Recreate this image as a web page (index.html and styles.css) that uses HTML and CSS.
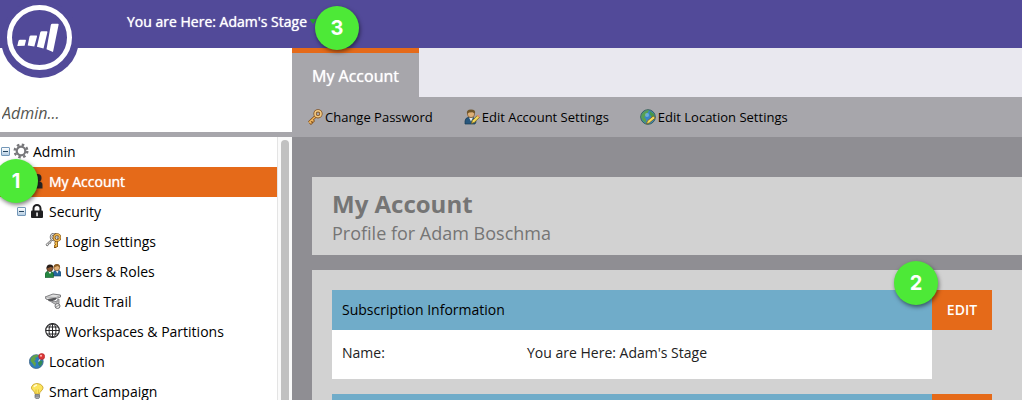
FILE: index.html
```html
<!DOCTYPE html>
<html lang="en">
<head>
  <meta charset="UTF-8" />
  <meta name="viewport" content="width=device-width, initial-scale=1.0" />
  <title>My Account</title>
  <link rel="stylesheet" href="styles.css">
</head>
<body>
  <header class="topbar">
    <a class="logo" href="#" aria-label="Home">
      <svg viewBox="0 0 80 80" width="80" height="80">
        <circle cx="40" cy="39" r="39" fill="#524a99"/>
        <circle cx="39.500" cy="37.500" r="30" fill="none" stroke="#fff" stroke-width="5"/>
        <g fill="#fff">
          <path d="M18.500 40.700q.5-.9 1.500-.9h5.300q.9 0 .6 1l-1.300 4.900-7.300.2z"/>
          <path d="M29.500 36.500q.4-1 1.400-1h5.500q.9 0 .6 1l-2.700 10-6.600-.9z"/>
          <path d="M40.300 32.300q.4-1 1.400-1h5q1 0 .7 1L43.500 48.600l-6.600-1.900z"/>
          <path d="M50.800 25q.4-1.300 1.500-1.300h5.600q1 0 .7 1.100L53 52l-6.500-2.800z"/>
        </g>
      </svg>
    </a>
    <button class="stage-menu">
      You are Here: Adam's Stage
      <svg class="caret" viewBox="0 0 6 6" width="6" height="6"><path d="M0 1h6v1L3 6 0 2z" fill="#249c32"/></svg>
      <span class="badge badge-stage">3</span>
    </button>
  </header>

  <div class="layout">
    <aside class="sidebar">
      <div class="search">
        <input type="text" placeholder="Admin..." aria-label="Search admin">
      </div>
      <div class="tree-wrap">
        <ul class="tree">
          <li class="node">
            <button class="toggle" aria-label="Collapse"></button>
            <svg class="icon" viewBox="0 0 16 16" width="16" height="16">
              <circle cx="8" cy="8" r="6.300" fill="none" stroke="#77777a" stroke-width="2.400" stroke-dasharray="2.500 2.450"/>
              <circle cx="8" cy="8" r="4.300" fill="none" stroke="#77777a" stroke-width="2.200"/>
            </svg>
            <a href="#">Admin</a>
          </li>
          <li class="node level-1 selected">
            <svg class="icon" viewBox="0 0 16 16" width="16" height="16" fill="#262626">
              <circle cx="8.500" cy="5" r="4"/><path d="M3 15.500V12q0-3.500 4-3.500h3q3.500 0 3.500 3.500v3.500z"/>
            </svg>
            <a href="#">My Account</a>
            <span class="badge badge-account">1</span>
          </li>
          <li class="node level-1 open">
            <button class="toggle" aria-label="Collapse"></button>
            <svg class="icon" viewBox="0 0 16 16" width="16" height="16">
              <path d="M4.500 8V5.500a3.500 3.500 0 0 1 7 0V8" fill="none" stroke="#1f1f21" stroke-width="2"/>
              <rect x="2" y="7.500" width="12" height="7.500" rx="1" fill="#1f1f21"/>
              <path d="M7.300 9.500h1.500v3.700H7.300z" fill="#fff"/>
            </svg>
            <a href="#">Security</a>
          </li>
          <li class="node level-2">
            <svg class="icon" viewBox="0 0 16 16" width="16" height="16">
              <path d="M7 6L1 11.500l1 1.500 1.500-1 .5-2 1.500.3.500-2L8 7" fill="#eee" stroke="#777" stroke-width="1"/>
              <circle cx="9" cy="4" r="3" fill="none" stroke="#777" stroke-width="2.600"/>
              <circle cx="9" cy="4" r="3" fill="none" stroke="#ddd" stroke-width="1"/>
              <path d="M11.500 7v7M11.500 10H9.500M11.500 13.500H9" stroke="#7a4c13" stroke-width="3"/>
              <path d="M11.500 7v6.500M11.500 10H10M11.500 13H9.500" stroke="#f3bd4b" stroke-width="1.500"/>
              <circle cx="12" cy="4.500" r="3" fill="none" stroke="#7a4c13" stroke-width="2.700"/>
              <circle cx="12" cy="4.500" r="3" fill="none" stroke="#f1bb54" stroke-width="1.300"/>
            </svg>
            <a href="#">Login Settings</a>
          </li>
          <li class="node level-2">
            <svg class="icon" viewBox="0 0 16 16" width="16" height="16">
              <path d="M8 13V10q1-3 4-3 4 0 4 4v2z" fill="#2668a0" stroke="#174363" stroke-width=".6"/>
              <path d="M10.500 7.500l2 3 1-3z" fill="#eee"/>
              <circle cx="11.700" cy="4.700" r="3" fill="#e1b076" stroke="#6a421e" stroke-width=".6"/>
              <path d="M8.500 5q0-4 3.500-4 3.500 0 3 4l-2-2-2 .5z" fill="#8a5b24"/>
              <path d="M0 14.500V11q1-3 4-3 4 0 4.500 3v3.500z" fill="#258641" stroke="#14542a" stroke-width=".6"/>
              <path d="M3 8l2 3 1.500-2.500z" fill="#fff"/>
              <circle cx="4.800" cy="5.500" r="3" fill="#8b5632" stroke="#3a2516" stroke-width=".6"/>
              <path d="M1.500 5.500Q1.500 1.500 5 1.500t3 3L5.500 4 3 5z" fill="#271d18"/>
            </svg>
            <a href="#">Users &amp; Roles</a>
          </li>
          <li class="node level-2">
            <svg class="icon" viewBox="0 0 16 16" width="16" height="16">
              <path d="M0 4l8-3 7.500 1v2L5.500 7.500 1 6z" fill="#e1e1e1" stroke="#717174" stroke-width=".9"/>
              <path d="M3 6l8-1.500v2L6 8.800 3.500 8z" fill="#58585b"/>
              <path d="M1 4l10 .5 4-2" fill="none" stroke="#9a9a9c" stroke-width=".8"/>
              <path d="M6.500 9l5 3 2.500-1.500V6l-2 1v2L9 8z" fill="#bbb" stroke="#747478" stroke-width=".8"/>
              <circle cx="12.500" cy="13" r="2.500" fill="#e8e8e8" stroke="#707074"/>
              <path d="M11 14l3-2" stroke="#999"/>
            </svg>
            <a href="#">Audit Trail</a>
          </li>
          <li class="node level-2">
            <svg class="icon" viewBox="0 0 16 16" width="16" height="16" fill="none" stroke="#28282a" stroke-width="1">
              <circle cx="7.500" cy="7.500" r="6.800" stroke-width="1.200"/>
              <ellipse cx="7.500" cy="7.500" rx="3.500" ry="6.800"/>
              <path d="M7.500 1v13.500M1 7.500h13M1.800 4h11.400M1.800 11h11.400"/>
            </svg>
            <a href="#">Workspaces &amp; Partitions</a>
          </li>
          <li class="node level-1">
            <svg class="icon" viewBox="0 0 16 16" width="16" height="16">
              <circle cx="7.300" cy="8.600" r="6.900" fill="#2e7dbd" stroke="#3a6286" stroke-width=".8"/>
              <path d="M2 5q3-4 7-3L8.500 4 6 5l1 2-2 1 2 2-1 4-2-3-2.500-3z" fill="#62a348"/>
              <path d="M10 7l3.500 1-.5 3-2 2.500L9 11z" fill="#348b52"/>
              <path d="M9.500 8.500L12 5" stroke="#ddd" stroke-width="1.200"/>
              <circle cx="12.700" cy="3.500" r="3" fill="#dc3737" stroke="#ad2025" stroke-width=".6"/>
              <circle cx="12" cy="2.700" r="1" fill="#ffc2bd"/>
            </svg>
            <a href="#">Location</a>
          </li>
          <li class="node level-1">
            <svg class="icon" viewBox="0 0 16 16" width="16" height="16">
              <path d="M6 11q0-2-2-3.500Q2 6 2.500 4q1-3.500 5.500-3.500T14 4q.5 2-1.800 4-1.700 1.500-1.700 3z" fill="#fce45d" stroke="#c9a532" stroke-width=".9"/>
              <path d="M5 4q1-2 3-2" fill="none" stroke="#fffbd4" stroke-width="1.600"/>
              <path d="M7 6.500v4M9.500 6.500v4" stroke="#d4b332" stroke-width=".7"/>
              <path d="M6 11.500h4.500v3l-1 1.200H7L6 14.500z" fill="#a9acb0" stroke="#676a70" stroke-width=".7"/>
              <path d="M6 13h4.500" stroke="#5e6167" stroke-width=".7"/>
            </svg>
            <a href="#">Smart Campaign</a>
          </li>
        </ul>
        <div class="scrollbar"><div class="thumb"></div></div>
      </div>
    </aside>

    <main class="main">
      <nav class="tabs">
        <a class="tab" href="#">My Account</a>
      </nav>
      <div class="toolbar">
        <button class="tool">
          <svg class="icon" viewBox="0 0 16 16" width="16" height="16" fill="none">
            <path d="M9 7L2 13.500M5 11l2 2M3 13l2 2" stroke="#82501c" stroke-width="3"/>
            <path d="M9 7L2 13.500M5 11l1.500 1.500M3 13l1.500 1.500" stroke="#f1b760" stroke-width="1.400"/>
            <circle cx="11" cy="4.800" r="3" stroke="#82501c" stroke-width="3.200"/>
            <circle cx="11" cy="4.800" r="3" stroke="#f3ca83" stroke-width="1.600"/>
          </svg>
          Change Password
        </button>
        <button class="tool">
          <svg class="icon" viewBox="0 0 16 16" width="16" height="16">
            <path d="M1 15v-3q0-3 4-4h3q4 1 4 5l-1 2z" fill="#28577d" stroke="#173952" stroke-width=".7"/>
            <path d="M5 8.500l2 4 2-4z" fill="#e7edf0"/>
            <circle cx="7" cy="5" r="3.600" fill="#ddb078" stroke="#72502b" stroke-width=".7"/>
            <path d="M3 5Q2 .5 7 .5t4 4L8.500 3.200 5 3.500z" fill="#705629"/>
            <path d="M7.500 14.500l.8-3 5-5 2 2-5 5z" fill="#f4d95c" stroke="#73601c" stroke-width=".8"/>
            <path d="M13 6.500l1.200-1 1.600 1.600-1 1.200z" fill="#e58d71"/>
          </svg>
          Edit Account Settings
        </button>
        <button class="tool">
          <svg class="icon" viewBox="0 0 16 16" width="16" height="16">
            <circle cx="8" cy="8" r="7.300" fill="#3984c9" stroke="#3b6259" stroke-width="1"/>
            <path d="M2 5q3-4 7-4L8 3.500 6 5l1 1.500L4 8l2 2v4L3 12 1 8z" fill="#58a052"/>
            <path d="M10 2l4 3 .5 4-3-1-2-3z" fill="#489749"/>
            <circle cx="7" cy="6" r="2" fill="#8bc7ed" opacity=".6"/>
            <path d="M6.500 15l.8-3 6-5 2 2-6 5z" fill="#f4d95c" stroke="#73601c" stroke-width=".8"/>
          </svg>
          Edit Location Settings
        </button>
      </div>
      <div class="content">
        <section class="card card-title">
          <h1>My Account</h1>
          <p>Profile for Adam Boschma</p>
        </section>
        <section class="card card-panels">
          <div class="panel">
            <div class="panel-box">
              <h2>Subscription Information</h2>
              <dl>
                <dt>Name:</dt>
                <dd>You are Here: Adam's Stage</dd>
              </dl>
            </div>
            <div class="panel-action">
              <button class="edit">EDIT</button>
              <span class="badge badge-edit">2</span>
            </div>
          </div>
          <div class="panel">
            <div class="panel-box panel-empty"></div>
            <div class="panel-action">
              <button class="edit" aria-label="Edit"></button>
            </div>
          </div>
        </section>
      </div>
    </main>
  </div>
</body>
</html>
```
FILE: styles.css
```css
:root {
  --purple: #524a99;
  --orange: #e56a19;
  --blue: #70acc9;
  --green: #4de937;
  --bar: #a7a6ab;
  --content: #8f8e93;
  --card: #d2d2d2;
}

* {
  box-sizing: border-box;
  margin: 0;
  padding: 0;
}

body {
  display: flex;
  flex-direction: column;
  height: 100vh;
  overflow: hidden;
  background: #fff;
  color: #000;
  font-family: "Open Sans", "Noto Sans", sans-serif;
  font-size: 14px;
}

a {
  color: inherit;
  text-decoration: none;
}

button {
  border: none;
  background: none;
  color: inherit;
  font: inherit;
  cursor: pointer;
}

svg {
  display: block;
  flex: none;
}

/* top bar */
.topbar {
  position: relative;
  z-index: 2;
  flex: none;
  height: 48px;
  padding-left: 127px;
  background: var(--purple);
  color: #fff;
}

.logo {
  position: absolute;
  left: 0;
  top: 0;
}

.stage-menu {
  position: relative;
  display: flex;
  align-items: center;
  gap: 3px;
  height: 42px;
  text-shadow: 0 0 1px #fff;
}

.badge {
  position: absolute;
  display: flex;
  align-items: center;
  justify-content: center;
  width: 44px;
  height: 44px;
  border-radius: 50%;
  background: var(--green);
  box-shadow: 1px 2px 4px rgba(0, 0, 0, 0.5);
  color: #fff;
  font-family: Inter, sans-serif;
  font-size: 20px;
  font-weight: 700;
  text-shadow: none;
}

.badge-stage {
  right: -43px;
  top: 6px;
}

.layout {
  display: flex;
  flex: 1;
  min-height: 0;
}

/* sidebar */
.sidebar {
  display: flex;
  flex-direction: column;
  flex: none;
  width: 292px;
}

.search {
  flex: none;
  height: 89px;
  padding-top: 50px;
  border-bottom: 5px solid var(--bar);
}

.search input {
  width: 100%;
  height: 30px;
  padding-left: 2px;
  border: none;
  outline: none;
  background: transparent;
  font-family: inherit;
  font-size: 16px;
  font-style: italic;
}

.search input::placeholder {
  color: #55554f;
  opacity: 1;
}

.tree-wrap {
  display: flex;
  flex: 1;
  min-height: 0;
}

.tree {
  flex: 1;
  list-style: none;
}

.node {
  position: relative;
  display: flex;
  align-items: center;
  gap: 4px;
  height: 30px;
  padding: 0 0 2px 1px;
}

.level-1 {
  padding-left: 29px;
}

.level-1.open {
  padding-left: 17px;
}

.level-2 {
  padding-left: 45px;
}

.node.selected {
  background: var(--orange);
  color: #fff;
  text-shadow: 0 0 1px #fff;
}

.toggle {
  width: 9px;
  height: 9px;
  margin-right: -1px;
  border: 1px solid #7397b8;
  border-radius: 1px;
  background:
    linear-gradient(#22445f, #22445f) center / 5px 1px no-repeat,
    linear-gradient(#fff, #b5cde2);
}

.badge-account {
  left: -6px;
  top: -8px;
}

.scrollbar {
  width: 15px;
  padding: 3px 3px 0;
  border-left: 1px solid #e4e4e4;
  background: #fafafa;
}

.thumb {
  height: 100%;
  border-radius: 4px 4px 0 0;
  background: #c1c1c1;
}

/* main area */
.main {
  display: flex;
  flex-direction: column;
  flex: 1;
  min-width: 0;
}

.tabs {
  display: flex;
  flex: none;
  height: 49px;
  background: #e9e8ef;
}

.tab {
  padding: 12px 20px 0;
  border-top: 5px solid var(--orange);
  background: var(--bar);
  color: #fff;
  font-size: 16px;
  text-shadow: 0 0 1px #fff;
}

.toolbar {
  display: flex;
  flex: none;
  gap: 31px;
  height: 40px;
  padding-left: 15px;
  background: var(--bar);
}

.tool {
  display: flex;
  align-items: center;
  gap: 2px;
  font-size: 13px;
}

.content {
  display: flex;
  flex: 1;
  flex-direction: column;
  gap: 15px;
  min-height: 0;
  padding: 40px 0 0 20px;
  background: var(--content);
}

.card {
  flex: none;
  background: var(--card);
}

.card-title {
  height: 78px;
  padding: 10px 20px;
  color: #757575;
}

.card-title h1 {
  font-size: 24px;
  line-height: 34px;
}

.card-title p {
  font-size: 18px;
  line-height: 24px;
}

.card-panels {
  display: flex;
  flex-direction: column;
  gap: 15px;
  padding: 20px 30px 20px 20px;
}

.panel {
  display: flex;
  align-items: flex-start;
}

.panel-box {
  flex: 1;
  background: #fff;
}

.panel-box h2 {
  padding: 0 10px;
  background: var(--blue);
  font-size: 14px;
  font-weight: 400;
  line-height: 40px;
}

.panel-empty {
  height: 40px;
  background: var(--blue);
}

.panel-box dl {
  display: flex;
  padding: 12px 10px 15px;
  color: #222;
  line-height: 22px;
}

.panel-box dt {
  width: 185px;
}

.panel-action {
  position: relative;
}

.edit {
  display: block;
  width: 60px;
  height: 40px;
  padding-bottom: 2px;
  background: var(--orange);
  color: #fff;
  font-weight: 600;
}

.badge-edit {
  left: -38px;
  top: -29px;
}
```
